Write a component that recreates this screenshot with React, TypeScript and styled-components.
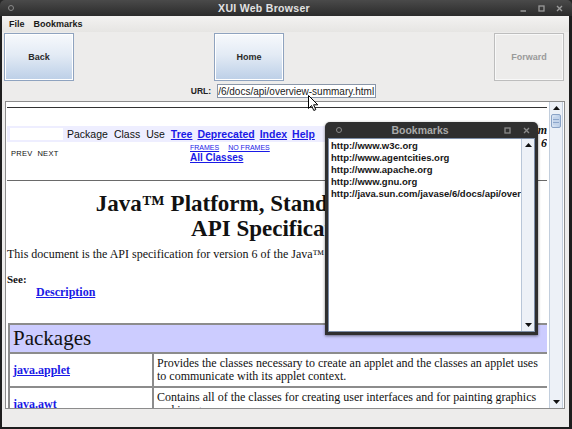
import styled, { createGlobalStyle } from "styled-components";

const GlobalStyle = createGlobalStyle`
  html, body {
    margin: 0;
    padding: 0;
    background: #262626;
  }
  body {
    width: 572px;
    height: 429px;
    overflow: hidden;
    font-family: "Liberation Sans", Arial, sans-serif;
  }
`;

const bookmarks = [
  "http://www.w3c.org",
  "http://www.agentcities.org",
  "http://www.apache.org",
  "http://www.gnu.org",
  "http://java.sun.com/javase/6/docs/api/overview-summary.html",
];

const packages = [
  {
    name: "java.applet",
    lines: [
      "Provides the classes necessary to create an applet and the classes an applet uses",
      "to communicate with its applet context.",
    ],
  },
  {
    name: "java.awt",
    lines: [
      "Contains all of the classes for creating user interfaces and for painting graphics",
      "and images.",
    ],
  },
];

const navLinks = ["Tree", "Deprecated", "Index", "Help"];

function WindowButtons({ color }: { color: string }) {
  return (
    <Controls>
      <svg width="7" height="7" viewBox="0 0 7 7">
        <path d="M0.5 6h5.5" stroke={color} strokeWidth="1.4" />
      </svg>
      <svg width="7" height="7" viewBox="0 0 7 7">
        <rect x="1" y="1" width="5" height="5" fill="none" stroke={color} strokeWidth="1.3" />
      </svg>
      <svg width="7" height="7" viewBox="0 0 7 7">
        <path d="M1 1l5 5M6 1l-5 5" stroke={color} strokeWidth="1.4" />
      </svg>
    </Controls>
  );
}

function Arrow({ down }: { down?: boolean }) {
  return (
    <svg width="7" height="4" viewBox="0 0 7 4">
      <path d={down ? "M0 0h7L3.5 4z" : "M3.5 0L7 4H0z"} fill="#111" />
    </svg>
  );
}

function App() {
  return (
    <Frame>
      <GlobalStyle />
      <TitleBar>
        <TitleDot />
        <TitleText>XUI Web Browser</TitleText>
        <WindowButtons color="#9a9a9a" />
      </TitleBar>
      <WindowBody>
        <MenuBar>
          <MenuItem>File</MenuItem>
          <MenuItem>Bookmarks</MenuItem>
        </MenuBar>
        <Toolbar>
          <NavButton>Back</NavButton>
          <NavButton $gap={140}>Home</NavButton>
          <NavButton $disabled>Forward</NavButton>
        </Toolbar>
        <UrlRow>
          <UrlLabel>URL:</UrlLabel>
          <UrlField>
            <span>http://java.sun.com/javase/6/docs/api/overview-summary.html</span>
          </UrlField>
        </UrlRow>
        <ContentPanel>
          <Viewport>
            <Rule $color="#333" $top={5} />
            <NavTable>
              <NavBar>
                <NavBlank />
                <NavWord>Package</NavWord>
                <NavWord>Class</NavWord>
                <NavWord>Use</NavWord>
                {navLinks.map((l) => (
                  <NavLink key={l}>{l}</NavLink>
                ))}
              </NavBar>
              <PlatformNote>
                Java™ Platform
                <br />
                Standard Ed. 6
              </PlatformNote>
              <SubNav>
                <PrevNext>PREV&nbsp;&nbsp;NEXT</PrevNext>
                <FramesCell>
                  <TinyLinks>
                    <TinyLink>FRAMES</TinyLink>
                    <TinyLink>NO FRAMES</TinyLink>
                  </TinyLinks>
                  <AllClasses>All Classes</AllClasses>
                </FramesCell>
              </SubNav>
            </NavTable>
            <Rule $color="#6a6a6a" $top={12} />
            <DocTitle>
              Java™ Platform, Standard Edition 6
              <br />
              API Specification
            </DocTitle>
            <Para>
              This document is the API specification for version 6 of the Java™ Platform, Standard
              Edition.
            </Para>
            <SeeLabel>See:</SeeLabel>
            <DescLink>Description</DescLink>
            <PackTable>
              <thead>
                <tr>
                  <PackHead colSpan={2}>Packages</PackHead>
                </tr>
              </thead>
              <tbody>
                {packages.map((p) => (
                  <tr key={p.name}>
                    <PackName>
                      <a>{p.name}</a>
                    </PackName>
                    <PackDesc>
                      {p.lines[0]}
                      <br />
                      {p.lines[1]}
                    </PackDesc>
                  </tr>
                ))}
              </tbody>
            </PackTable>
          </Viewport>
          <VScroll>
            <ScrollArrow>
              <Arrow />
            </ScrollArrow>
            <Thumb />
            <ScrollTrack />
            <ScrollArrow>
              <Arrow down />
            </ScrollArrow>
          </VScroll>
        </ContentPanel>
        <StatusArea />
      </WindowBody>

      <BookmarksWindow>
        <SubTitleBar>
          <TitleDot />
          <SubTitleText>Bookmarks</SubTitleText>
          <SubControls>
            <svg width="7" height="7" viewBox="0 0 7 7">
              <rect x="1" y="1" width="5" height="5" fill="none" stroke="#8a8a8a" strokeWidth="1.3" />
            </svg>
            <svg width="7" height="7" viewBox="0 0 7 7">
              <path d="M1 1l5 5M6 1l-5 5" stroke="#8a8a8a" strokeWidth="1.4" />
            </svg>
          </SubControls>
        </SubTitleBar>
        <BookmarkBody>
          <BookmarkList>
            {bookmarks.map((b) => (
              <BookmarkItem key={b}>{b}</BookmarkItem>
            ))}
          </BookmarkList>
          <ListScroll>
            <ScrollArrow>
              <Arrow />
            </ScrollArrow>
            <ScrollTrack />
            <ScrollArrow>
              <Arrow down />
            </ScrollArrow>
          </ListScroll>
        </BookmarkBody>
      </BookmarksWindow>

      <Cursor width="11" height="16" viewBox="0 0 11 16">
        <path d="M0.5 0.5v13l3-3 2.3 5 2-0.9-2.2-4.8h4.2z" fill="#fff" stroke="#000" strokeWidth="1" />
      </Cursor>
    </Frame>
  );
}

export default App;

const Frame = styled.div`
  position: relative;
  width: 572px;
  height: 429px;
  display: flex;
  flex-direction: column;
  background: #1e1e1e;
  border-radius: 5px 5px 0 0;
  overflow: hidden;
`;

const TitleBar = styled.div`
  flex: none;
  height: 16px;
  display: flex;
  align-items: center;
  padding: 0 6px 0 8px;
  background: linear-gradient(#4a4a4a, #2b2b2b);
`;

const TitleDot = styled.span`
  width: 4px;
  height: 4px;
  border-radius: 50%;
  border: 1px solid #8a8a8a;
  flex: none;
`;

const TitleText = styled.div`
  flex: 1;
  text-align: center;
  color: #e2e2e2;
  font-size: 10.5px;
  font-weight: bold;
  letter-spacing: 0.3px;
  padding-right: 6px;
`;

const Controls = styled.div`
  display: flex;
  align-items: center;
  gap: 11px;
  padding-right: 3px;
`;

const WindowBody = styled.div`
  flex: 1;
  display: flex;
  flex-direction: column;
  margin: 0 3px 2px 2px;
  background: #edeceb;
  min-height: 0;
`;

const MenuBar = styled.div`
  flex: none;
  height: 16px;
  display: flex;
  align-items: center;
  gap: 9px;
  padding-left: 7px;
  background: linear-gradient(#f3f2f1, #e6e5e3);
`;

const MenuItem = styled.span`
  font-size: 9px;
  font-weight: bold;
  color: #1a1a1a;
`;

const Toolbar = styled.div`
  flex: none;
  height: 50px;
  display: flex;
  align-items: flex-start;
  padding: 1px 5px 0 2px;
  box-sizing: border-box;
`;

const NavButton = styled.div<{ $gap?: number; $disabled?: boolean }>`
  width: 70px;
  height: 48px;
  box-sizing: border-box;
  display: flex;
  align-items: center;
  justify-content: center;
  margin-left: ${(p) => (p.$disabled ? "auto" : `${p.$gap ?? 0}px`)};
  font-size: 9px;
  font-weight: bold;
  color: ${(p) => (p.$disabled ? "#9a9a9a" : "#2a2a2a")};
  border: 1px solid ${(p) => (p.$disabled ? "#bdbdbd" : "#8fa3bf")};
  background: ${(p) =>
    p.$disabled ? "#edeceb" : "linear-gradient(#f7f9fc 0%, #e3ebf5 45%, #bccfe7 100%)"};
  box-shadow: ${(p) => (p.$disabled ? "inset 0 0 0 1px #f8f8f8" : "inset 0 0 0 1px #ffffff")};
`;

const UrlRow = styled.div`
  flex: none;
  height: 18px;
  display: flex;
  align-items: center;
  justify-content: center;
  gap: 6px;
  padding-right: 4px;
`;

const UrlLabel = styled.span`
  font-size: 8.5px;
  font-weight: bold;
  color: #222;
`;

const UrlField = styled.div`
  width: 159px;
  height: 14px;
  box-sizing: border-box;
  border: 1px solid #8a96a8;
  background: #fff;
  display: flex;
  justify-content: flex-end;
  align-items: center;
  overflow: hidden;
  white-space: nowrap;
  font-size: 10px;
  color: #222;
  padding-right: 1px;
`;

const ContentPanel = styled.div`
  flex: 1;
  min-height: 0;
  display: flex;
  margin: 1px 4px 0 3px;
  border: 1px solid #8c8c8c;
  background: #fff;
`;

const Viewport = styled.div`
  flex: 1;
  overflow: hidden;
  background: #fff;
  padding-left: 1px;
`;

const Rule = styled.div<{ $color: string; $top: number }>`
  margin-top: ${(p) => p.$top}px;
  height: 0;
  border-top: 1px solid ${(p) => p.$color};
`;

const NavTable = styled.div`
  display: grid;
  grid-template-columns: 1fr auto;
  grid-template-rows: 18px 26px;
  margin-top: 16px;
`;

const NavBar = styled.div`
  grid-column: 1;
  grid-row: 1;
  margin-top: 2px;
  height: 16px;
  display: flex;
  align-items: center;
  gap: 5px;
  padding-left: 3px;
  background: #eeeeff;
  font-size: 10.5px;
`;

const NavBlank = styled.span`
  width: 53px;
  height: 12px;
  background: #fff;
  margin-right: -1px;
`;

const NavWord = styled.span`
  color: #111;
  margin-right: 1px;
`;

const NavLink = styled.span`
  color: #1a1ae6;
  font-weight: bold;
  text-decoration: underline;
`;

const PlatformNote = styled.div`
  grid-column: 2;
  grid-row: 1 / span 2;
  padding-left: 8px;
  text-align: right;
  font-family: "Liberation Serif", "Times New Roman", serif;
  font-style: italic;
  font-weight: bold;
  font-size: 12px;
  line-height: 13px;
  color: #111;
  background: #fff;
`;

const SubNav = styled.div`
  grid-column: 1;
  grid-row: 2;
  display: grid;
  grid-template-columns: 183px 1fr;
`;

const PrevNext = styled.div`
  padding: 7px 0 0 4px;
  font-size: 7.5px;
  letter-spacing: 0.3px;
  color: #111;
`;

const FramesCell = styled.div`
  padding-top: 1px;
  display: flex;
  flex-direction: column;
  align-items: flex-start;
`;

const TinyLinks = styled.div`
  display: flex;
  gap: 9px;
  line-height: 9px;
`;

const TinyLink = styled.span`
  font-size: 7px;
  color: #1a1ae6;
  text-decoration: underline;
`;

const AllClasses = styled.span`
  font-size: 10px;
  line-height: 12px;
  font-weight: bold;
  color: #1a1ae6;
  text-decoration: underline;
`;

const DocTitle = styled.h1`
  margin: 10px 0 0;
  text-align: center;
  font-family: "Liberation Serif", "Times New Roman", serif;
  font-size: 23px;
  line-height: 25px;
  font-weight: bold;
  color: #111;
  white-space: nowrap;
`;

const Para = styled.p`
  margin: 7px 0 0;
  font-family: "Liberation Serif", "Times New Roman", serif;
  font-size: 12px;
  line-height: 13px;
  color: #111;
  white-space: nowrap;
`;

const SeeLabel = styled.div`
  margin-top: 12px;
  font-family: "Liberation Serif", "Times New Roman", serif;
  font-size: 11px;
  line-height: 13px;
  font-weight: bold;
  color: #111;
`;

const DescLink = styled.div`
  margin: -1px 0 0 29px;
  font-family: "Liberation Serif", "Times New Roman", serif;
  font-size: 12px;
  line-height: 14px;
  font-weight: bold;
  color: #1a1ae6;
  text-decoration: underline;
`;

const PackTable = styled.table`
  margin: 24px 0 0 1px;
  width: 541px;
  border-collapse: separate;
  border-spacing: 0;
  border: 1px solid #8c8c8c;
  font-family: "Liberation Serif", "Times New Roman", serif;
  color: #111;
`;

const PackHead = styled.th`
  border: 1px solid #8c8c8c;
  background: #ccccff;
  text-align: left;
  padding: 2px 3px;
  font-size: 21px;
  line-height: 23px;
  font-weight: normal;
`;

const PackName = styled.td`
  width: 136px;
  border: 1px solid #8c8c8c;
  padding: 3px;
  vertical-align: middle;
  font-size: 12px;
  font-weight: bold;

  a {
    color: #1a1ae6;
    text-decoration: underline;
  }
`;

const PackDesc = styled.td`
  border: 1px solid #8c8c8c;
  padding: 3px;
  font-size: 12px;
  line-height: 13px;
  white-space: nowrap;
`;

const VScroll = styled.div`
  flex: none;
  width: 12px;
  margin: 0 1px 0 2px;
  display: flex;
  flex-direction: column;
  background: #edf1f7;
  border-left: 1px solid #c2cedd;
  border-right: 1px solid #c2cedd;
`;

const ScrollArrow = styled.div`
  flex: none;
  height: 12px;
  display: flex;
  align-items: center;
  justify-content: center;
`;

const Thumb = styled.div`
  flex: none;
  height: 12px;
  margin: 0 1px;
  border: 1px solid #8aa3c6;
  border-radius: 2px;
  background: repeating-linear-gradient(
      #c4d4ea 0px,
      #c4d4ea 2px,
      #8ca6cb 2px,
      #8ca6cb 3px
    )
    center / 6px 8px no-repeat,
    linear-gradient(90deg, #dbe6f4, #b9cde7);
`;

const ScrollTrack = styled.div`
  flex: 1;
`;

const StatusArea = styled.div`
  flex: none;
  height: 18px;
`;

const BookmarksWindow = styled.div`
  position: absolute;
  left: 325px;
  top: 122px;
  width: 213px;
  height: 213px;
  box-sizing: border-box;
  display: flex;
  flex-direction: column;
  padding: 0 3px 3px 3px;
  background: #2f2f2f;
  border-radius: 5px 5px 0 0;
  box-shadow: 0 1px 3px rgba(0, 0, 0, 0.5);
`;

const SubTitleBar = styled.div`
  flex: none;
  height: 16px;
  display: flex;
  align-items: center;
  padding: 0 3px 0 8px;
`;

const SubTitleText = styled.div`
  flex: 1;
  text-align: center;
  padding-right: 6px;
  color: #a9a9a9;
  font-size: 10.5px;
  font-weight: bold;
`;

const SubControls = styled.div`
  display: flex;
  align-items: center;
  gap: 12px;
  padding-right: 2px;
`;

const BookmarkBody = styled.div`
  flex: 1;
  min-height: 0;
  display: flex;
  background: #fff;
  border: 1px solid #7d8ea8;
`;

const BookmarkList = styled.div`
  flex: 1;
  overflow: hidden;
  padding: 1px 0 0 2px;
`;

const BookmarkItem = styled.div`
  font-size: 9.5px;
  line-height: 12px;
  font-weight: bold;
  color: #161616;
  white-space: nowrap;
`;

const ListScroll = styled.div`
  flex: none;
  width: 12px;
  display: flex;
  flex-direction: column;
  background: #edf1f7;
  border-left: 1px solid #b8c6d8;
`;

const Cursor = styled.svg`
  position: absolute;
  left: 308px;
  top: 95px;
`;
